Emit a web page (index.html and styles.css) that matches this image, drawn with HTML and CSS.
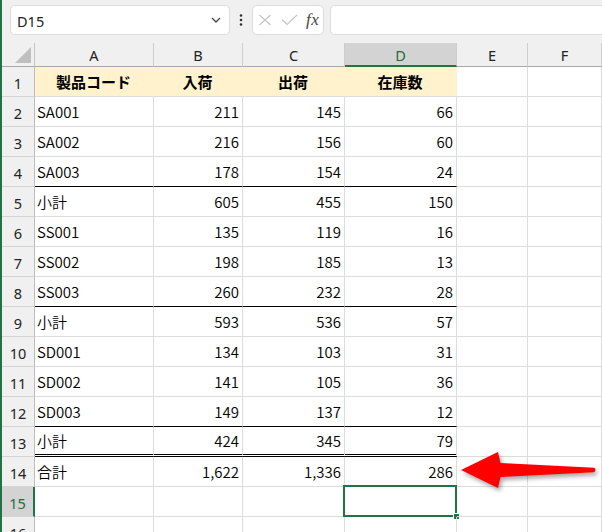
FILE: index.html
```html
<!DOCTYPE html>
<html lang="ja">
<head>
<meta charset="utf-8">
<title>Sheet</title>
<link rel="stylesheet" href="styles.css">
</head>
<body>
<div class="app">
  <div class="fbar">
    <div class="namebox">
      <span class="nb-text">D15</span>
      <svg class="chev" width="10" height="6" viewBox="0 0 10 6"><polyline points="1,1 5,5 9,1" fill="none" stroke="#444" stroke-width="1.3"/></svg>
    </div>
    <div class="dots">
      <svg width="4" height="12" viewBox="0 0 4 12"><circle cx="2" cy="1.5" r="1.3" fill="#333"/><circle cx="2" cy="6" r="1.3" fill="#333"/><circle cx="2" cy="10.5" r="1.3" fill="#333"/></svg>
    </div>
    <div class="fxbox">
      <svg class="ico" width="14" height="12" viewBox="0 0 14 12"><path d="M1.5 1 L12.5 11 M12.5 1 L1.5 11" stroke="#c4c4c4" stroke-width="1.2" fill="none"/></svg>
      <svg class="ico" width="17" height="12" viewBox="0 0 17 12"><polyline points="1,5.5 6,10.5 16,1" stroke="#c4c4c4" stroke-width="1.2" fill="none"/></svg>
      <span class="fx">fx</span>
    </div>
    <div class="finput"></div>
  </div>

  <div class="grid">
    <div class="corner"><span class="tri"></span></div>
    <div class="ch">A</div><div class="ch">B</div><div class="ch">C</div><div class="ch sel-col">D</div><div class="ch">E</div><div class="ch">F</div>

    <div class="rh">1</div>
    <div class="c hd">製品コード</div><div class="c hd">入荷</div><div class="c hd">出荷</div><div class="c hd">在庫数</div><div class="c"></div><div class="c"></div>

    <div class="rh">2</div>
    <div class="c">SA001</div><div class="c num">211</div><div class="c num">145</div><div class="c num">66</div><div class="c"></div><div class="c"></div>

    <div class="rh">3</div>
    <div class="c">SA002</div><div class="c num">216</div><div class="c num">156</div><div class="c num">60</div><div class="c"></div><div class="c"></div>

    <div class="rh">4</div>
    <div class="c bt">SA003</div><div class="c num bt">178</div><div class="c num bt">154</div><div class="c num bt">24</div><div class="c"></div><div class="c"></div>

    <div class="rh">5</div>
    <div class="c">小計</div><div class="c num">605</div><div class="c num">455</div><div class="c num">150</div><div class="c"></div><div class="c"></div>

    <div class="rh">6</div>
    <div class="c">SS001</div><div class="c num">135</div><div class="c num">119</div><div class="c num">16</div><div class="c"></div><div class="c"></div>

    <div class="rh">7</div>
    <div class="c">SS002</div><div class="c num">198</div><div class="c num">185</div><div class="c num">13</div><div class="c"></div><div class="c"></div>

    <div class="rh">8</div>
    <div class="c bt">SS003</div><div class="c num bt">260</div><div class="c num bt">232</div><div class="c num bt">28</div><div class="c"></div><div class="c"></div>

    <div class="rh">9</div>
    <div class="c">小計</div><div class="c num">593</div><div class="c num">536</div><div class="c num">57</div><div class="c"></div><div class="c"></div>

    <div class="rh">10</div>
    <div class="c">SD001</div><div class="c num">134</div><div class="c num">103</div><div class="c num">31</div><div class="c"></div><div class="c"></div>

    <div class="rh">11</div>
    <div class="c">SD002</div><div class="c num">141</div><div class="c num">105</div><div class="c num">36</div><div class="c"></div><div class="c"></div>

    <div class="rh">12</div>
    <div class="c bt">SD003</div><div class="c num bt">149</div><div class="c num bt">137</div><div class="c num bt">12</div><div class="c"></div><div class="c"></div>

    <div class="rh">13</div>
    <div class="c bd">小計</div><div class="c num bd">424</div><div class="c num bd">345</div><div class="c num bd">79</div><div class="c"></div><div class="c"></div>

    <div class="rh">14</div>
    <div class="c">合計</div><div class="c num">1,622</div><div class="c num">1,336</div><div class="c num">286</div><div class="c"></div><div class="c"></div>

    <div class="rh sel-row">15</div>
    <div class="c"></div><div class="c"></div><div class="c"></div><div class="c active"><span class="selbox"></span><span class="handle"></span></div><div class="c"></div><div class="c"></div>

    <div class="rh">16</div>
    <div class="c"></div><div class="c"></div><div class="c"></div><div class="c"></div><div class="c"></div><div class="c"></div>
  </div>

  <svg class="arrow" width="147" height="50" viewBox="0 0 147 50">
    <path d="M6 25 L43 7 L45.5 18 L139 22.8 Q142 25 139 27.2 L45.5 32 L43 43 Z" fill="#ff0000"/>
  </svg>
</div>
</body>
</html>
```

FILE: styles.css
```css
html, body {
  margin: 0;
  padding: 0;
  background: #ffffff;
}
body {
  width: 602px;
  height: 532px;
  overflow: hidden;
}
.app {
  position: relative;
  width: 600px;
  height: 532px;
  border-left: 2px solid #217346;
  overflow: hidden;
  font-family: "Noto Sans CJK JP", sans-serif;
  color: #000;
}

/* formula bar */
.fbar {
  height: 43px;
  box-sizing: border-box;
  background: #f0f0f0;
  display: flex;
  align-items: flex-start;
  padding-top: 5px;
  padding-left: 8px;
}
.namebox {
  width: 220px;
  height: 30px;
  box-sizing: border-box;
  background: #fff;
  border: 1px solid #dcdcdc;
  border-radius: 5px;
  display: flex;
  align-items: center;
  justify-content: space-between;
  padding: 0 8px 0 6px;
  font-family: "Noto Sans", "Liberation Sans", sans-serif;
  font-size: 14.5px;
  color: #222;
}
.nb-text { padding-top: 1px; }
.dots {
  width: 22px;
  height: 30px;
  display: flex;
  align-items: center;
  justify-content: center;
}
.fxbox {
  width: 72px;
  height: 30px;
  box-sizing: border-box;
  background: #fff;
  border: 1px solid #dcdcdc;
  border-radius: 5px;
  display: flex;
  align-items: center;
  padding-left: 5px;
  gap: 9px;
}
.fxbox .ico { display: block; }
.fx {
  font-family: "Liberation Serif", serif;
  font-style: italic;
  font-size: 17px;
  color: #444;
  margin-left: -1px;
  letter-spacing: 0.5px;
}
.finput {
  flex: 1;
  height: 30px;
  margin-left: 6px;
  margin-right: -10px;
  box-sizing: border-box;
  background: #fff;
  border: 1px solid #dcdcdc;
  border-radius: 5px;
}

/* sheet grid */
.grid {
  display: grid;
  grid-template-columns: 33px 119px 89px 102px 112px 71px 74px;
  grid-template-rows: 24px repeat(16, 30px);
}
.grid > div { box-sizing: border-box; }

.corner {
  position: relative;
  background: #f0f0f0;
  border-right: 1px solid #c4c4c4;
  border-bottom: 1px solid #a8a8a8;
}
.tri {
  position: absolute;
  right: 3px;
  bottom: 3px;
  width: 0;
  height: 0;
  border-left: 16px solid transparent;
  border-bottom: 16px solid #bfbfbf;
}
.ch {
  background: #f0f0f0;
  border-right: 1px solid #cdcdcd;
  border-bottom: 1px solid #a8a8a8;
  display: flex;
  align-items: center;
  justify-content: center;
  font-family: "Noto Sans", "Liberation Sans", sans-serif;
  font-size: 14.5px;
  color: #222;
  padding-top: 1px;
}
.ch.sel-col {
  background: #d3d3d3;
  color: #1d6b3d;
  border-bottom: 2px solid #217346;
  padding-top: 2px;
}
.rh {
  background: #f0f0f0;
  border-right: 1px solid #bdbdbd;
  border-bottom: 1px solid #d4d4d4;
  display: flex;
  align-items: center;
  justify-content: center;
  font-family: "Noto Sans", "Liberation Sans", sans-serif;
  font-size: 14.5px;
  color: #222;
  padding-top: 2px;
}
.rh.sel-row {
  background: #d3d3d3;
  color: #1d6b3d;
  border-right: 2px solid #217346;
}

.c {
  position: relative;
  border-right: 1px solid #dcdcdc;
  border-bottom: 1px solid #dcdcdc;
  display: flex;
  align-items: center;
  padding: 1px 3px 0 2px;
  font-size: 15px;
  font-weight: 350;
  line-height: 20px;
  white-space: nowrap;
}
.num { justify-content: flex-end; }
.hd {
  background: #fff2cc;
  border-right-color: #fff2cc;
  justify-content: center;
  font-weight: bold;
}
.bt { border-bottom: 1px solid #000; }
.bd { border-bottom: 3px double #000; }

.active { overflow: visible; }
.selbox {
  position: absolute;
  left: -2px;
  top: -2px;
  right: -1px;
  bottom: -1px;
  border: 2px solid #217346;
}
.handle {
  position: absolute;
  right: -3px;
  bottom: -3px;
  width: 5px;
  height: 5px;
  background: #217346;
  border: 1px solid #fff;
  border-right: none;
  border-bottom: none;
}

.arrow {
  position: absolute;
  left: 453px;
  top: 445px;
  overflow: visible;
  filter: drop-shadow(2px 3px 2px rgba(0, 0, 0, 0.35));
}
```
